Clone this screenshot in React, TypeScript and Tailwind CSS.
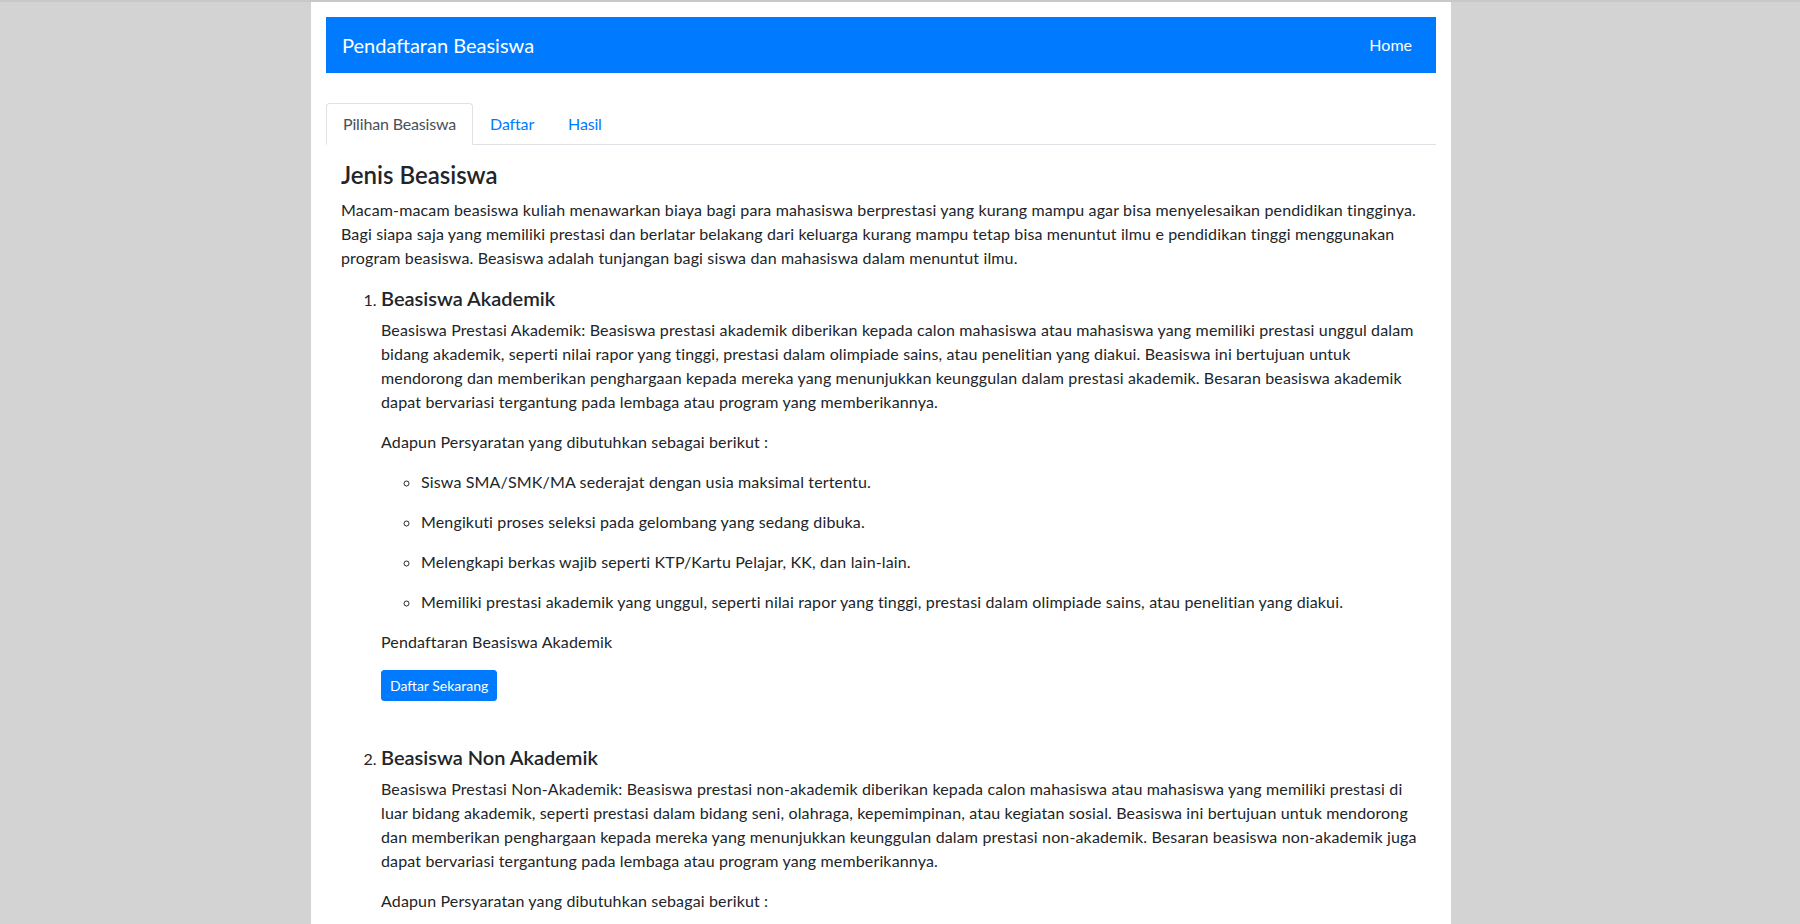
import { useState } from "react";

const tabs = ["Pilihan Beasiswa", "Daftar", "Hasil"];

type Beasiswa = {
  title: string;
  description: string;
  requirements: string[];
  register: string;
};

const beasiswaList: Beasiswa[] = [
  {
    title: "Beasiswa Akademik",
    description:
      "Beasiswa Prestasi Akademik: Beasiswa prestasi akademik diberikan kepada calon mahasiswa atau mahasiswa yang memiliki prestasi unggul dalam bidang akademik, seperti nilai rapor yang tinggi, prestasi dalam olimpiade sains, atau penelitian yang diakui. Beasiswa ini bertujuan untuk mendorong dan memberikan penghargaan kepada mereka yang menunjukkan keunggulan dalam prestasi akademik. Besaran beasiswa akademik dapat bervariasi tergantung pada lembaga atau program yang memberikannya.",
    requirements: [
      "Siswa SMA/SMK/MA sederajat dengan usia maksimal tertentu.",
      "Mengikuti proses seleksi pada gelombang yang sedang dibuka.",
      "Melengkapi berkas wajib seperti KTP/Kartu Pelajar, KK, dan lain-lain.",
      "Memiliki prestasi akademik yang unggul, seperti nilai rapor yang tinggi, prestasi dalam olimpiade sains, atau penelitian yang diakui.",
    ],
    register: "Pendaftaran Beasiswa Akademik",
  },
  {
    title: "Beasiswa Non Akademik",
    description:
      "Beasiswa Prestasi Non-Akademik: Beasiswa prestasi non-akademik diberikan kepada calon mahasiswa atau mahasiswa yang memiliki prestasi di luar bidang akademik, seperti prestasi dalam bidang seni, olahraga, kepemimpinan, atau kegiatan sosial. Beasiswa ini bertujuan untuk mendorong dan memberikan penghargaan kepada mereka yang menunjukkan keunggulan dalam prestasi non-akademik. Besaran beasiswa non-akademik juga dapat bervariasi tergantung pada lembaga atau program yang memberikannya.",
    requirements: [
      "Siswa SMA/SMK/MA sederajat dengan usia maksimal tertentu.",
      "Mengikuti proses seleksi pada gelombang yang sedang dibuka.",
      "Melengkapi berkas wajib seperti KTP/Kartu Pelajar, KK, dan lain-lain.",
      "Memiliki prestasi non-akademik yang unggul, seperti di bidang seni, olahraga, kepemimpinan, atau kegiatan sosial.",
    ],
    register: "Pendaftaran Beasiswa Non Akademik",
  },
];

const App = () => {
  const [activeTab, setActiveTab] = useState("Pilihan Beasiswa");

  return (
    <div className="min-h-screen border-t-2 border-[#c8c8cc] bg-[#d3d3d3] font-['Lato',sans-serif] text-[16px] leading-6 text-[#212529]">
      <div className="ml-[311px] min-h-[922px] w-[1140px] bg-white px-[15px] pt-[15px]">
        <nav className="flex h-14 items-center justify-between bg-[#007bff] px-4">
          <a className="text-[20px] leading-[30px] text-white">Pendaftaran Beasiswa</a>
          <a className="px-2 py-2 text-white">Home</a>
        </nav>

        <div className="mt-[30px] flex border-b border-[#dee2e6] tracking-[-0.01em]">
          {tabs.map((tab) => (
            <button
              key={tab}
              onClick={() => setActiveTab(tab)}
              className={
                tab === activeTab
                  ? "-mb-px rounded-t border border-[#dee2e6] border-b-white bg-white px-4 py-2 text-[#495057]"
                  : "-mb-px border border-transparent px-4 py-2 text-[#007bff]"
              }
            >
              {tab}
            </button>
          ))}
        </div>

        <div className="px-[15px] pt-4 tracking-[0.009em]">
          <h3 className="mb-2 text-[24px] font-semibold leading-[1.2] tracking-normal">Jenis Beasiswa</h3>
          <p className="mb-4">
            Macam-macam beasiswa kuliah menawarkan biaya bagi para mahasiswa berprestasi yang kurang mampu agar bisa
            menyelesaikan pendidikan tingginya. Bagi siapa saja yang memiliki prestasi dan berlatar belakang dari
            keluarga kurang mampu tetap bisa menuntut ilmu e pendidikan tinggi menggunakan program beasiswa. Beasiswa
            adalah tunjangan bagi siswa dan mahasiswa dalam menuntut ilmu.
          </p>

          <ol className="list-decimal pl-10">
            {beasiswaList.map((item) => (
              <li key={item.title} className="mb-[44px]">
                <h5 className="mb-2 text-[20px] font-semibold leading-[1.2] tracking-normal">{item.title}</h5>
                <p className="mb-4">{item.description}</p>
                <p className="mb-4">Adapun Persyaratan yang dibutuhkan sebagai berikut :</p>
                <ul className="mb-4 list-[circle] pl-10">
                  {item.requirements.map((req) => (
                    <li key={req}>
                      <p className="mb-4">{req}</p>
                    </li>
                  ))}
                </ul>
                <p className="mb-4">{item.register}</p>
                <button className="rounded-[3px] border border-[#007bff] bg-[#007bff] px-2 py-1 text-[14px] leading-[21px] tracking-normal text-white">
                  Daftar Sekarang
                </button>
              </li>
            ))}
          </ol>
        </div>
      </div>
    </div>
  );
};

export default App;
